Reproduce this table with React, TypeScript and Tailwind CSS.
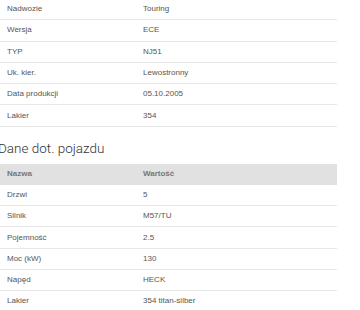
import React from "react";

const basic: [string, string][] = [
    ["Nadwozie", "Touring"],
    ["Wersja", "ECE"],
    ["TYP", "NJ51"],
    ["Uk. kier.", "Lewostronny"],
    ["Data produkcji", "05.10.2005"],
    ["Lakier", "354"],
];

const vehicle: [string, string][] = [
    ["Drzwi", "5"],
    ["Silnik", "M57/TU"],
    ["Pojemność", "2.5"],
    ["Moc (kW)", "130"],
    ["Napęd", "HECK"],
    ["Lakier", "354 titan-silber"],
];

function Row({label, value}: {label: string; value: string}) {
    return (
        <div className="flex items-center h-[21.3px] border-b border-[#e8e8e8] text-[8px] text-[#555]">
            <div className="w-[136px] pl-[7px]">{label}</div>
            <div className="pl-[7px]">{value}</div>
        </div>
    );
}

export default function App() {
    return (
        <div
            className="w-[360px] h-[310px] bg-white overflow-hidden"
            style={{fontFamily: "'Liberation Sans', Arial, sans-serif"}}
        >
            <div className="w-[337px] -mt-[1px]">
                {basic.map(([l, v]) => (
                    <Row key={l} label={l} value={v}/>
                ))}
            </div>

            <h2
                className="h-[37px] pt-[15px] -ml-[2px] text-[13.5px] font-light leading-none text-[#333]"
                style={{fontFamily: "Roboto, sans-serif"}}
            >
                Dane dot. pojazdu
            </h2>

            <div className="w-[337px]">
                <div className="flex items-center h-[21px] bg-[#e1e1e1] text-[8px] font-bold text-[#777]">
                    <div className="w-[136px] pl-[7px]">Nazwa</div>
                    <div className="pl-[7px]">Wartość</div>
                </div>
                {vehicle.map(([l, v]) => (
                    <Row key={l} label={l} value={v}/>
                ))}
            </div>
        </div>
    );
}
